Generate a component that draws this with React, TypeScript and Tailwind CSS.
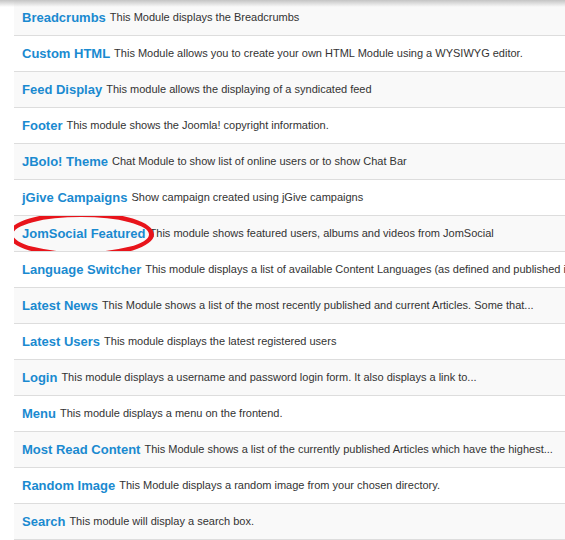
const modules = [
  { name: "Breadcrumbs", desc: "This Module displays the Breadcrumbs" },
  { name: "Custom HTML", desc: "This Module allows you to create your own HTML Module using a WYSIWYG editor." },
  { name: "Feed Display", desc: "This module allows the displaying of a syndicated feed" },
  { name: "Footer", desc: "This module shows the Joomla! copyright information." },
  { name: "JBolo! Theme", desc: "Chat Module to show list of online users or to show Chat Bar" },
  { name: "jGive Campaigns", desc: "Show campaign created using jGive campaigns" },
  { name: "JomSocial Featured", desc: "This module shows featured users, albums and videos from JomSocial", circled: true },
  { name: "Language Switcher", desc: "This module displays a list of available Content Languages (as defined and published in" },
  { name: "Latest News", desc: "This Module shows a list of the most recently published and current Articles. Some that..." },
  { name: "Latest Users", desc: "This module displays the latest registered users" },
  { name: "Login", desc: "This module displays a username and password login form. It also displays a link to..." },
  { name: "Menu", desc: "This module displays a menu on the frontend." },
  { name: "Most Read Content", desc: "This Module shows a list of the currently published Articles which have the highest..." },
  { name: "Random Image", desc: "This Module displays a random image from your chosen directory." },
  { name: "Search", desc: "This module will display a search box." },
];

export default function App() {
  return (
    <div className="relative h-[540px] w-[565px] overflow-hidden bg-white font-['Liberation_Sans',Arial,sans-serif]">
      {/* top shadow */}
      <div className="pointer-events-none absolute inset-x-0 top-0 z-10 h-[7px] bg-gradient-to-b from-[#c4c4c4] to-transparent" />
      <ul className="pl-[14px]">
        {modules.map((m, i) => (
          <li
            key={m.name}
            className={`flex h-[36px] items-center overflow-hidden whitespace-nowrap border-b border-[#dddddd] pb-px pl-2 ${
              i % 2 === 0 ? "bg-[#f9f9f9]" : "bg-white"
            }`}
          >
            <span className="relative">
              <a className="text-[13px] font-bold text-[#1a8ad0]">{m.name}</a>
              {m.circled && (
                <span className="pointer-events-none absolute -left-[14px] -right-[8px] -top-[9px] -bottom-[12px] rounded-[50%] border-[5px] border-[#e8141b]" />
              )}
            </span>
            <span className="ml-[4px] text-[11px] text-[#333333]">{m.desc}</span>
          </li>
        ))}
      </ul>
    </div>
  );
}
